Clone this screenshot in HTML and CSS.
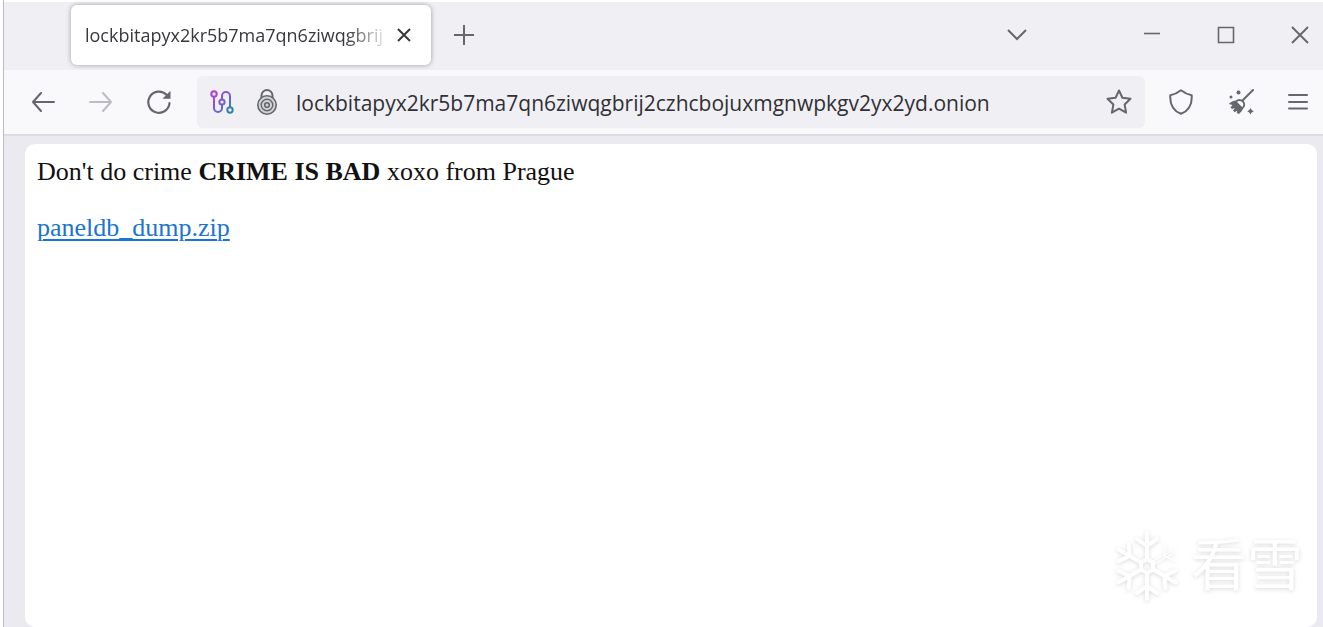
FILE: index.html
```
<!DOCTYPE html>
<html lang="en">
<head>
  <meta charset="UTF-8">
  <meta name="viewport" content="width=device-width, initial-scale=1.0">
  <title>lockbitapyx2kr5b7ma7qn6ziwqgbrij2czhcbojuxmgnwpkgv2yx2yd.onion</title>
  <link rel="stylesheet" href="styles.css">
</head>
<body>
<div class="window">
  <header class="tabbar">
    <div class="tab">
      <span class="tab-title">lockbitapyx2kr5b7ma7qn6ziwqgbrij</span>
      <button class="icon-btn tab-close" aria-label="Close tab">
        <svg width="16" height="16" viewBox="0 0 16 16"><path d="M2 2l12 12M14 2L2 14" stroke-width="2"/></svg>
      </button>
    </div>
    <button class="icon-btn new-tab" aria-label="New tab">
      <svg width="20" height="20" viewBox="0 0 20 20"><path d="M10 0v20M0 10h20" stroke-width="2"/></svg>
    </button>
    <button class="icon-btn tab-list" aria-label="List all tabs">
      <svg width="20" height="12" viewBox="0 0 20 12"><path d="M1 1l9 9 9-9" stroke-width="2"/></svg>
    </button>
    <div class="window-controls">
      <button class="icon-btn" aria-label="Minimize">
        <svg width="18" height="18" viewBox="0 0 18 18"><path d="M1 7.500h16" stroke-width="1.6"/></svg>
      </button>
      <button class="icon-btn" aria-label="Maximize">
        <svg width="18" height="18" viewBox="0 0 18 18"><path d="M1.500 1.500h15v15h-15z" stroke-width="1.6"/></svg>
      </button>
      <button class="icon-btn" aria-label="Close">
        <svg width="18" height="18" viewBox="0 0 18 18"><path d="M1 1l16 16M17 1L1 17" stroke-width="1.9"/></svg>
      </button>
    </div>
  </header>

  <nav class="toolbar">
    <div class="nav-buttons">
      <button class="icon-btn" aria-label="Back">
        <svg width="24" height="20" viewBox="0 0 24 20"><path d="M10 1L2 10l8 9M2 10h21" stroke-width="2" stroke-linejoin="round" stroke-linecap="round"/></svg>
      </button>
      <button class="icon-btn" aria-label="Forward" disabled>
        <svg width="24" height="20" viewBox="0 0 24 20"><path d="M14 1l8 9-8 9M22 10H1" stroke-width="2" stroke-linejoin="round" stroke-linecap="round"/></svg>
      </button>
      <button class="icon-btn" aria-label="Reload">
        <svg width="24" height="24" viewBox="0 0 24 24"><path d="M22.500 13A10.600 10.600 0 1 1 19.500 4.800" stroke-width="2.200" stroke-linecap="round"/><path class="solid" d="M23.500.8v8h-8z"/></svg>
      </button>
    </div>

    <div class="urlbar">
      <button class="icon-btn" aria-label="Tor circuit">
        <svg width="24" height="24" viewBox="0 0 24 24">
          <defs>
            <linearGradient id="circuit" x1="0" y1="0" x2="24" y2="24" gradientUnits="userSpaceOnUse">
              <stop offset="0" stop-color="#c735d8"/>
              <stop offset=".55" stop-color="#7062d0"/>
              <stop offset="1" stop-color="#12929c"/>
            </linearGradient>
          </defs>
          <g stroke="url(#circuit)" stroke-width="2">
            <circle cx="4" cy="4" r="2.7"/>
            <circle cx="12" cy="12" r="2.6"/>
            <circle cx="20" cy="20" r="2.7"/>
            <path d="M4 7v11a4 4 0 0 0 8 0v-3.400M12 9.400V6a4 4 0 0 1 8 0v11"/>
          </g>
        </svg>
      </button>
      <button class="icon-btn" aria-label="Site information">
        <svg width="22" height="26" viewBox="0 0 22 26"><path d="M5.500 9V6.500a5.500 5.500 0 0 1 11 0V9" stroke-width="2"/><circle class="onion" cx="11" cy="16" r="9.200" stroke-width="1.6"/><circle cx="11" cy="16" r="5.800" stroke-width="1.4"/><circle cx="11" cy="16" r="2.300" stroke-width="1.6"/></svg>
      </button>
      <input class="url" type="text" aria-label="Address" value="lockbitapyx2kr5b7ma7qn6ziwqgbrij2czhcbojuxmgnwpkgv2yx2yd.onion">
      <button class="icon-btn" aria-label="Bookmark this page">
        <svg width="26" height="26" viewBox="0 0 26 26"><path d="M13 1.500l3.400 7.200 8.100 1.100-5.900 5.600 1.500 8.300-7.100-4-7.100 4 1.500-8.300-5.900-5.600 8.100-1.100z" stroke-width="2" stroke-linejoin="round"/></svg>
      </button>
    </div>

    <div class="tools">
      <button class="icon-btn" aria-label="Security level">
        <svg width="26" height="26" viewBox="0 0 26 26"><path d="M13 1.200C9.500 4 6 5.500 2.300 6.200 1.800 14 4.500 21.500 13 24.800 21.500 21.500 24.200 14 23.700 6.200 20 5.500 16.500 4 13 1.200z" stroke-width="2" stroke-linejoin="round"/></svg>
      </button>
      <button class="icon-btn" aria-label="New identity">
        <svg width="26" height="26" viewBox="0 0 26 26"><path d="M25 1L14.500 11.500" stroke-width="2" stroke-linecap="round"/><path d="M8 12.500c2.500-2.200 5.600-1.800 7.200.2 1.500 2 1.300 4.200-.5 6.300" stroke-width="1.800"/><path class="solid" d="M7.500 11.500l7.800 7.800c-.9 2-2.200 3.800-4.300 5.700l-2.200-1 .4-2.600-2.500 1.900-1.700-1.700 2-2.700-3 1.200-1.500-1.600 2-2.500L.8 15c1.600-2 4-3 6.700-3.500z"/><circle class="solid" cx="3" cy="8" r="1.500"/><circle class="solid" cx="10.500" cy="3.500" r="2"/><path class="solid" d="M22.500 19l1.200 2 2 1.200-2 1.200-1.200 2-1.200-2-2-1.200 2-1.200z"/></svg>
      </button>
      <button class="icon-btn" aria-label="Open application menu">
        <svg width="20" height="18" viewBox="0 0 20 18"><path d="M1 2h18M1 9h18M1 15.500h18" stroke-width="2" stroke-linecap="round"/></svg>
      </button>
    </div>
  </nav>

  <div class="viewport">
    <main class="page">
      <p>Don't do crime <b>CRIME IS BAD</b> xoxo from Prague</p>
      <p><a href="#">paneldb_dump.zip</a></p>
      <div class="watermark">
        <svg width="64" height="72" viewBox="-32 -36 64 72">
          <defs>
            <g id="arm">
              <path d="M0-7V-33M0-20l-10-7M0-20l10-7"/>
            </g>
            <g id="thin-arm">
              <path d="M-1-8V-32M2-8V-32M0-20l-10-7M0-20l10-7"/>
            </g>
          </defs>
          <path d="M0-7l6 3.500v7L0 7l-6-3.500v-7z"/>
          <use href="#arm"/>
          <use class="thin" href="#thin-arm" transform="rotate(60)"/>
          <use href="#arm" transform="rotate(120)"/>
          <use href="#arm" transform="rotate(180)"/>
          <use href="#arm" transform="rotate(240)"/>
          <use href="#arm" transform="rotate(300)"/>
        </svg>
        <span lang="zh">看雪</span>
      </div>
    </main>
  </div>
</div>
</body>
</html>
```
FILE: styles.css
```
* {
    box-sizing: border-box;
}

body {
    margin: 0;
    background-color: #fff;
    font-family: "Open Sans", "Noto Sans", sans-serif;
}

.window {
    display: flex;
    flex-direction: column;
    min-height: 100vh;
    padding-top: 2px;
    margin-left: 3px;
    border-left: 1px solid #bdbcc4;
}

.icon-btn {
    display: flex;
    align-items: center;
    justify-content: center;
    flex-shrink: 0;
    padding: 0;
    border: 0;
    background: none;
    color: #66666f;
    cursor: pointer;
}

.icon-btn:disabled {
    color: #bcbcc2;
}

svg {
    display: block;
    fill: none;
    stroke: currentColor;
}

.solid {
    fill: currentColor;
    stroke: none;
}

.onion {
    fill: #d2d2d6;
}

/* tabs */
.tabbar {
    display: flex;
    align-items: center;
    height: 68px;
    padding: 0 14px 2px 67px;
    background-color: #f0eff4;
}

.tab {
    display: flex;
    align-items: center;
    width: 360px;
    height: 60px;
    padding: 0 19px 0 14px;
    border-radius: 6px;
    background-color: #fff;
    box-shadow: 0 0 5px rgba(0, 0, 0, 0.35);
}

.tab-title {
    flex: 1;
    overflow: hidden;
    white-space: nowrap;
    font-size: 18px;
    color: #38383d;
    mask-image: linear-gradient(to left, transparent, #000 44px);
}

.tab-close {
    margin-left: 6px;
    color: #38383d;
}

.new-tab {
    margin-left: 23px;
}

.tab-list {
    margin-left: auto;
}

.window-controls {
    display: flex;
    gap: 56px;
    margin-left: 116px;
}

/* navigation */
.toolbar {
    display: flex;
    align-items: center;
    height: 66px;
    padding: 0 15px 0 27px;
    border-bottom: 2px solid #dddde2;
    background-color: #f9f9fb;
}

.nav-buttons {
    display: flex;
    gap: 34px;
}

.urlbar {
    display: flex;
    flex: 1;
    align-items: center;
    height: 52px;
    margin-left: 26px;
    padding: 0 13px;
    border-radius: 6px;
    background-color: #f0eff4;
}

.urlbar .icon-btn + .icon-btn {
    margin-left: 22px;
}

.url {
    flex: 1;
    min-width: 0;
    margin: 0 18px;
    padding: 2px 0 0;
    border: 0;
    outline: 0;
    background: none;
    font-family: inherit;
    font-size: 21px;
    color: #303036;
}

.tools {
    display: flex;
    align-items: center;
    gap: 34px;
    margin-left: 23px;
}

/* content */
.viewport {
    display: flex;
    flex: 1;
    padding: 8px 6px 0 21px;
    background-color: #ebeaf0;
}

.page {
    position: relative;
    flex: 1;
    padding: 14px 12px;
    border-radius: 10px;
    background-color: #fff;
    font-family: "Liberation Serif", serif;
    font-size: 26px;
    line-height: 28px;
    color: #111;
}

.page p {
    margin: 0 0 28px;
}

.page a {
    color: #1a75d2;
    text-decoration-thickness: 2px;
    text-underline-offset: 3px;
}

.watermark {
    position: absolute;
    right: 14px;
    bottom: 25px;
    display: flex;
    gap: 12px;
    font-family: "Noto Sans CJK SC", sans-serif;
    font-size: 56px;
    line-height: 62px;
    color: #fff;
    filter: drop-shadow(0 1px 2px rgba(0, 0, 0, 0.15));
}

.watermark svg {
    stroke-width: 4;
    stroke-linecap: round;
}

.watermark .thin {
    stroke-width: 1;
}
```
